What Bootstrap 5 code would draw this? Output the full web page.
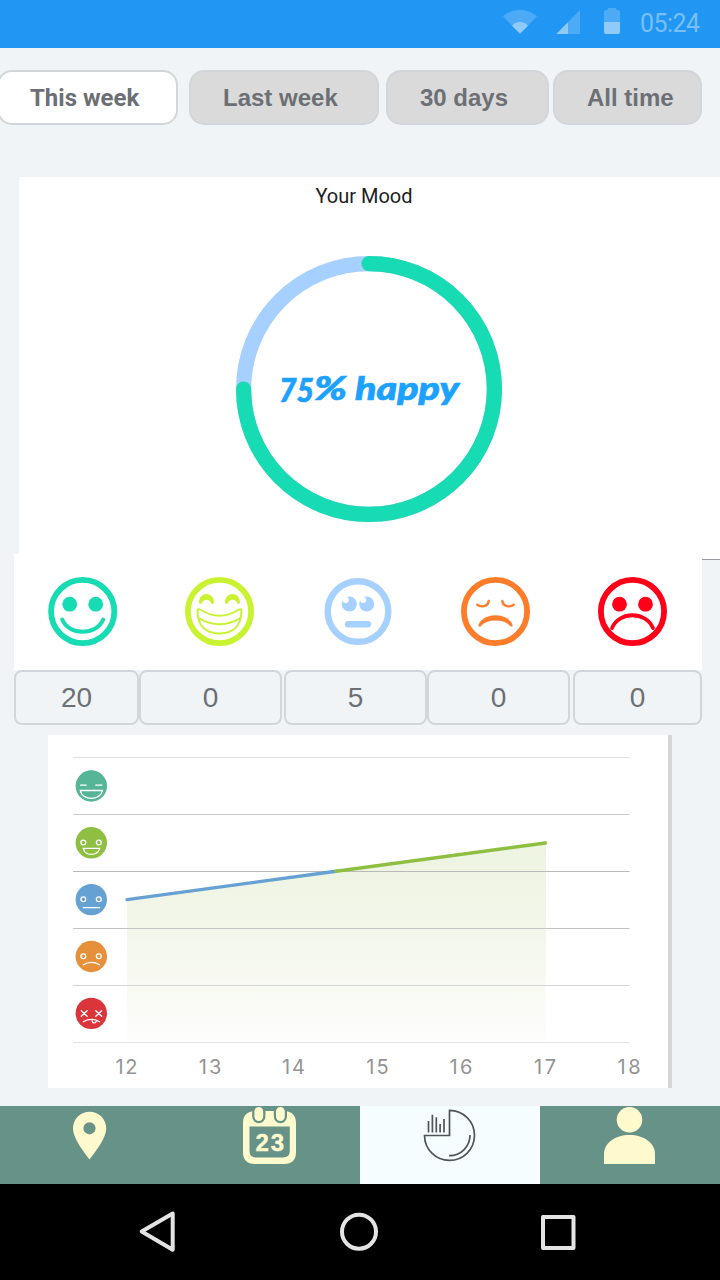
<!DOCTYPE html>
<html lang="en">
<head>
<meta charset="utf-8">
<meta name="viewport" content="width=device-width, initial-scale=1">
<title>Your Mood</title>
<link href="https://cdn.jsdelivr.net/npm/bootstrap@5.3.0/dist/css/bootstrap.min.css" rel="stylesheet">
<style>
body{background:#f0f4f7;font-family:"Liberation Sans",Arial,sans-serif;width:720px;height:1280px;overflow:hidden}
svg{display:block;flex:none}
.status-bar{height:48px;background:#2196f3;padding-right:20px}
.status-time{font:25px/48px Roboto,sans-serif;color:#78bff8;margin-left:18px;width:60px;white-space:nowrap;letter-spacing:-.55px}
.range-tabs{margin-top:22px;height:55px}
.range-tabs .btn{height:55px;border:2px solid #d2d6da;border-radius:15px;background:#dadada;color:#6c7075;font-weight:700;font-size:24px;line-height:50px;padding:0;text-align:left;white-space:nowrap;flex:none}
.range-tabs .btn.active{background:#fff;color:#6c7075;border-color:#d2d6da;font-family:Roboto,sans-serif}
.tab-week{width:181px;margin-left:-3px}
.tab-week span{padding-left:31px}
.tab-last{width:190px;margin-left:11px}
.tab-last span{padding-left:32px}
.tab-month{width:163px;margin-left:7px}
.tab-month span{padding-left:32px}
.tab-all{width:149px;margin-left:4px}
.tab-all span{padding-left:32px}
.mood-card{margin:52px 0 0 19px;height:383px;border:0;border-bottom:1px solid #95989e;border-radius:0;background:#fff}
.mood-title{font:20px/24px Roboto,sans-serif;color:#212121;margin-top:7px;padding-right:11px}
.ring{margin:47px 0 0 216px}
.ring text{font-family:Lato,sans-serif;font-weight:900;font-style:italic;font-size:32px;fill:#1ba1ff}
.faces{margin:-6px 18px 0 14px;height:116px;background:#fff;position:relative}
.counts{margin:0 18px 0 14px;height:55px;font-size:28px;line-height:51px;color:#6c7073}
.count-box{border:2px solid #d2d6da;border-radius:8px;height:55px;flex:none;text-align:center}
.chart-card{margin:10px 0 0 48px;width:624px;height:353px;border:0;border-right:4px solid #d5d6da;border-radius:0;background:#fff}
.axis{font-family:Inter,sans-serif;font-size:20px;fill:#949494;text-anchor:middle}
.tab-bar{margin-top:18px;height:78px;background:#679288}
.tab-bar .nav-link{padding:0;height:78px;border-radius:0;background:#679288}
.tab-bar .nav-link.active{background:#f5fdff}
.cal-num{font:700 24px "Liberation Sans",Arial,sans-serif;fill:#fffacd;stroke:#fffacd;stroke-width:.4px}
.system-bar{height:96px;background:#000}
</style>
</head>
<body>
<header class="status-bar d-flex align-items-center justify-content-end">
  <svg width="120" height="48" viewBox="502 0 120 48">
    <path d="M520 33.7 503 16.3Q511 9.7 520 9.7T537 16.3Z" fill="#4dabf6"/>
    <path d="M520 33.7 512 25.7Q515.500 22 520 22T528 25.700Z" fill="#90caf9"/>
    <path d="M580 10V34H556.300Z" fill="#4dabf6"/><path d="M568 22.300V34H556.300Z" fill="#90caf9"/>
    <path d="M608 8h8v2h2a2 2 0 0 1 2 2v10h-16V12a2 2 0 0 1 2-2h2z" fill="#4dabf6"/>
    <path d="M604 22h16v10a2 2 0 0 1-2 2h-12a2 2 0 0 1-2-2z" fill="#90caf9"/>
  </svg>
  <span class="status-time">05:24</span>
</header>

<main>
  <div class="range-tabs d-flex">
    <button class="btn active tab-week"><span>This week</span></button>
    <button class="btn tab-last"><span>Last week</span></button>
    <button class="btn tab-month"><span>30 days</span></button>
    <button class="btn tab-all"><span>All time</span></button>
  </div>

  <section class="card mood-card">
    <div class="mood-title text-center">Your Mood</div>
    <svg class="ring" width="268" height="268" viewBox="-134 -134 268 268" fill="none" stroke-width="15.2">
      <circle r="125.400" stroke="#a6d0ff"/>
      <path d="M0-125.400A125.400 125.400 0 1 1-125.400 0" stroke="#17dbb2" stroke-linecap="round"/>
      <text y="11" stroke="#1ba1ff" stroke-width=".7"><tspan x="-90" y="13" textLength="35" lengthAdjust="spacingAndGlyphs">75</tspan><tspan x="-55" y="11" textLength="33" lengthAdjust="spacingAndGlyphs">%</tspan> <tspan x="-14" y="11" textLength="104" lengthAdjust="spacingAndGlyphs">happy</tspan></text>
    </svg>
  </section>

  <section class="faces row g-0 align-items-center text-center">
    <div class="col d-flex justify-content-center"><svg width="70" height="70" viewBox="-34.700 -34.500 70 70" fill="none" stroke="#17dbb2">
      <circle r="31.600" stroke-width="5.800"/><g fill="#17dbb2" stroke="none"><circle cx="-13" cy="-7.300" r="7.400"/><circle cx="13" cy="-7.300" r="7.400"/></g>
      <path d="M-20.500 8C-14 24.300 14 24.300 20.500 8" stroke-width="4" stroke-linecap="round"/></svg></div>
    <div class="col d-flex justify-content-center"><svg width="70" height="70" viewBox="-34.500 -34.500 70 70" fill="none" stroke="#c9f230">
      <circle r="31.600" stroke-width="5.800"/>
      <g fill="#c9f230" stroke="none"><path id="arch" d="M-20.500-9C-20.500-20.500-5.500-20.500-5.500-9Q-6-6.500-8.300-8.200C-9.500-13-16.500-13-17.700-8.200Q-20-6.500-20.500-9Z"/><use href="#arch" x="26"/></g>
      <path d="M-22-1.500Q-21-3-18.500-1.500Q0 10 18.500-1.500Q21.500-3 22-1.500C22 14 14 22 0 22S-22 14-22-1.500ZM-21 6.500Q0 19 21 6.500" stroke-width="2"/></svg></div>
    <div class="col d-flex justify-content-center"><svg width="70" height="70" viewBox="-35 -34.500 70 70" fill="#a6d0ff">
      <circle r="30.300" fill="none" stroke="#a6d0ff" stroke-width="6.500"/><circle cx="-8.700" cy="-7.500" r="7.600"/><circle cx="8.700" cy="-7.500" r="7.600"/>
      <g fill="#fff"><circle cx="-12.200" cy="-11.400" r="3"/><circle cx="5.200" cy="-11.400" r="3"/></g>
      <rect x="-13" y="9.500" width="26" height="6.600" rx="3"/></svg></div>
    <div class="col d-flex justify-content-center"><svg width="70" height="70" viewBox="-34.500 -34.500 70 70" fill="none" stroke="#ff7c2a" stroke-linecap="round">
      <circle r="31.600" stroke-width="5.800"/>
      <path d="M-18.300-6.800C-15-4-7.500-4.500-6.800-10.500M18.300-6.800C15-4 7.500-4.500 6.800-10.500" stroke-width="2.400"/>
      <path d="M-15.800 13.800C-11 2 11 2 15.800 13.800C9 5.700-9 5.700-15.800 13.800Z" fill="#ff7c2a" stroke-width="2.600" stroke-linejoin="round"/></svg></div>
    <div class="col d-flex justify-content-center"><svg width="70" height="70" viewBox="-34.500 -34.500 70 70" fill="none" stroke="#ff0018">
      <circle r="31.600" stroke-width="5.800"/><g fill="#ff0018" stroke="none"><circle cx="-13" cy="-7.300" r="7.400"/><circle cx="13" cy="-7.300" r="7.400"/></g>
      <path d="M-20.500 16.500C-13-.500 13-.500 20.500 16.500" stroke-width="3.800" stroke-linecap="round"/></svg></div>
  </section>

  <div class="counts d-flex">
    <div class="count-box" style="width:125px">20</div>
    <div class="count-box" style="width:143px">0</div>
    <div class="count-box" style="width:143px;margin-left:2px">5</div>
    <div class="count-box" style="width:143px">0</div>
    <div class="count-box" style="width:129px;margin-left:3px">0</div>
  </div>

  <section class="card chart-card">
    <svg width="620" height="353" viewBox="48 735 620 353" fill="none">
      <defs><linearGradient id="fade" x1="0" y1="843" x2="0" y2="1042" gradientUnits="userSpaceOnUse"><stop stop-color="#edf4e0"/><stop offset=".4" stop-color="#f2f6e9"/><stop offset="1" stop-color="#fdfdfc"/></linearGradient></defs>
      <path d="M127 899.700 546 843V1042H127Z" fill="url(#fade)"/>
      <g><path d="M73 757.500H629.500" stroke="#dedede"/><path d="M73 814.500H629.500" stroke="#cbcbcb"/><path d="M73 871.500H629.500" stroke="#b9b9b9"/><path d="M73 928.500H629.500" stroke="#c4c4c4"/><path d="M73 985.500H629.500" stroke="#d5d5d5"/><path d="M73 1042.500H629.500" stroke="#e2e2e2"/></g>
      <g stroke-width="3.400" stroke-linecap="round"><path d="M127 899.600 336 871.300" stroke="#65a1d2"/><path d="M336 871.300 545.500 843" stroke="#8ebf42" /></g>
      <g stroke="#fff" stroke-width="1.300" stroke-linecap="round">
        <g transform="translate(91.300 786)"><circle r="15.700" fill="#55b596" stroke="none"/><path d="M-10.700-.800h5.500M4.500-.800h6M-11 4.500H11C9.500 15-9.500 15-11 4.500Z"/></g>
        <g transform="translate(91.300 842.800)"><circle r="15.700" fill="#8ebf42" stroke="none"/><circle cx="-8" cy="-.300" r="2.400"/><circle cx="7.500" cy="-.300" r="2.400"/><path d="M-8 5.500H8.300C6.500 13.500-6.500 13.500-8 5.500Z"/></g>
        <g transform="translate(91.300 899.600)"><circle r="15.700" fill="#65a1d2" stroke="none"/><circle cx="-8" cy="-.300" r="2.400"/><circle cx="7.500" cy="-.300" r="2.400"/><path d="M-8 8H8.300"/></g>
        <g transform="translate(91.300 956.500)"><circle r="15.700" fill="#e7903b" stroke="none"/><circle cx="-8" cy="-.300" r="2.400"/><circle cx="7.500" cy="-.300" r="2.400"/><path d="M-8 8.300Q0 3.500 8.300 8.300"/></g>
        <g transform="translate(91.300 1013.400)"><circle r="15.700" fill="#db353c" stroke="none"/><path d="M-10-2.700l5.800 5.500M-4.200-2.700l-5.800 5.500M4.500-2.700l5.800 5.500M10.300-2.700 4.500 2.800M-8 8.300Q0 3.700 8.300 8.300M.800 6C.500 10.500 4.800 10.500 5.200 7"/></g>
      </g>
      <g class="axis"><text x="126.500" y="1074.300" textLength="22">12</text><text x="210" y="1074.300" textLength="22.500">13</text><text x="293.500" y="1074.300" textLength="23">14</text><text x="377.500" y="1074.300" textLength="22.500">15</text><text x="461" y="1074.300" textLength="23">16</text><text x="545" y="1074.300" textLength="22">17</text><text x="629" y="1074.300" textLength="23">18</text></g>
    </svg>
  </section>
</main>

<nav class="tab-bar nav nav-pills nav-fill row g-0">
  <a class="nav-link col-3" href="#" aria-label="Map"><svg width="180" height="78" viewBox="0 1106 180 78"><path fill="#fffacd" fill-rule="evenodd" d="M89.500 1159.500C82 1149.500 73 1138 73 1128.300a16.600 16.600 0 0 1 33.200 0C106.200 1138 97 1149.500 89.500 1159.500ZM89.500 1122.200a6.100 6.100 0 1 0 0 12.200 6.100 6.100 0 0 0 0-12.200Z"/></svg></a>
  <a class="nav-link col-3" href="#" aria-label="Calendar"><svg width="180" height="78" viewBox="180 1106 180 78"><path fill="#fffacd" fill-rule="evenodd" d="M255 1111H284Q296 1111.500 296 1123V1152Q296 1164 284 1164H255Q243 1164 243 1152V1123Q243 1111.500 255 1111ZM249.500 1126.500V1151Q249.500 1157.500 256 1157.500H283Q289.800 1157.500 289.800 1151V1126.500Z"/>
    <g fill="#fffacd" stroke="#679288" stroke-width="2.200"><rect x="253.300" y="1105.900" width="11" height="16.200" rx="5.500"/><rect x="274.900" y="1105.900" width="11" height="16.200" rx="5.500"/></g>
    <text class="cal-num" x="255.500" y="1150.500" textLength="28.500">23</text></svg></a>
  <a class="nav-link active col-3" href="#" aria-label="Statistics"><svg width="180" height="78" viewBox="360 1106 180 78" fill="none" stroke="#505457" stroke-width="1.700"><path d="M449.500 1110.400A25 25 0 1 1 424.500 1135.500H449.500ZM470 1135A20.500 20.500 0 0 1 449 1155.700"/><path d="M428.500 1121v11.500M432.400 1114.700v17.800M436.300 1117.300v15.200M440.100 1124v8.500M444 1119v13.500"/></svg></a>
  <a class="nav-link col-3" href="#" aria-label="Profile"><svg width="180" height="78" viewBox="540 1106 180 78" fill="#fffacd"><circle cx="629.500" cy="1119.800" r="12.800"/><path d="M604 1164V1154C604 1143 615 1135 629.500 1135S655 1143 655 1154V1164Z"/></svg></a>
</nav>

<footer class="system-bar">
  <svg width="720" height="96" viewBox="0 1184 720 96" fill="none" stroke="#e4e4e4" stroke-width="4" stroke-linejoin="round"><path d="M141.700 1231.500 172.700 1213.500V1249.700Z"/><circle cx="359" cy="1231.700" r="17"/><rect x="543" y="1217" width="30.500" height="31"/></svg>
</footer>
<script src="https://cdn.jsdelivr.net/npm/bootstrap@5.3.0/dist/js/bootstrap.bundle.min.js"></script>
</body>
</html>
